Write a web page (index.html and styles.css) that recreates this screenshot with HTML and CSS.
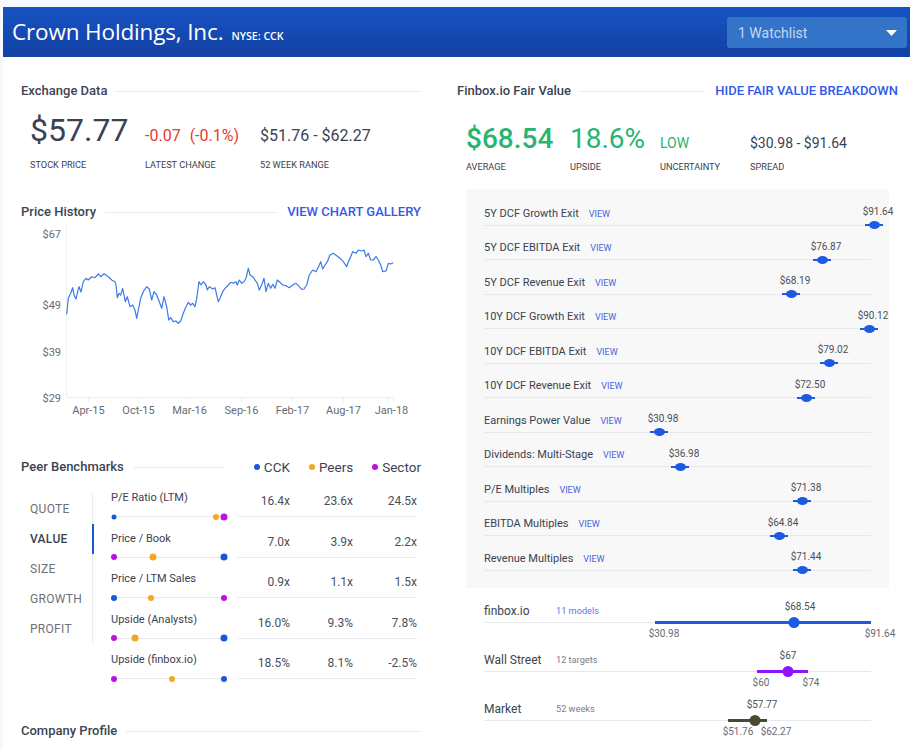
FILE: index.html
```html
<!DOCTYPE html>
<html lang="en">
<head>
<meta charset="utf-8">
<title>Crown Holdings, Inc.</title>
<link rel="stylesheet" href="styles.css">
</head>
<body>
<div class="page">
  <header class="topbar">
    <div class="brand"><h1 class="company">Crown Holdings, Inc.</h1><span class="ticker">NYSE: CCK</span></div>
    <div class="watch"><span>1 Watchlist</span><svg class="caret" width="11" height="6" viewBox="0 0 11 6"><path d="M0 0h11L5.5 6z" fill="#fff"/></svg></div>
  </header>

  <div class="main">
    <div class="col-left">
      <section class="exch">
        <div class="sec-head"><h2>Exchange Data</h2><span class="rule"></span></div>
        <div class="stats">
          <div class="val big">$57.77</div>
          <div class="val red">-0.07<span class="pct">(-0.1%)</span></div>
          <div class="val">$51.76 - $62.27</div>
          <div class="lbl">Stock Price</div>
          <div class="lbl">Latest Change</div>
          <div class="lbl">52 Week Range</div>
        </div>
      </section>

      <section class="history">
        <div class="sec-head"><h2>Price History</h2><span class="rule"></span><a class="link">VIEW CHART GALLERY</a></div>
        <svg class="chart" width="400" height="200" viewBox="21 222 400 200">
          <g stroke="#eceff3" fill="none" stroke-width="1">
            <path d="M66.5 226V397.5H393.5"/>
            <path d="M88.5 397v5M138.5 397v5M189.5 397v5M241.5 397v5M292.5 397v5M343.5 397v5M388.5 397v5M393.5 397v5"/>
          </g>
          <g class="ax">
            <text x="61" y="237.5" text-anchor="end">$67</text>
            <text x="61" y="309" text-anchor="end">$49</text>
            <text x="61" y="355.5" text-anchor="end">$39</text>
            <text x="61" y="402" text-anchor="end">$29</text>
            <text x="88.5" y="414" text-anchor="middle">Apr-15</text>
            <text x="138.5" y="414" text-anchor="middle">Oct-15</text>
            <text x="189.5" y="414" text-anchor="middle">Mar-16</text>
            <text x="241.5" y="414" text-anchor="middle">Sep-16</text>
            <text x="292.5" y="414" text-anchor="middle">Feb-17</text>
            <text x="343.5" y="414" text-anchor="middle">Aug-17</text>
            <text x="391.5" y="414" text-anchor="middle">Jan-18</text>
          </g>
          <path class="price" d="M66.7,314.3 L68.3,298.3 70.7,293.3 72.7,287.7 74,295 76,299 77.7,291.7 79,286.7 81,292 83.3,281.7 86,278.3 88.3,280 91.7,276.7 95,277.7 98.3,274 100.7,276.7 104,273.7 108.3,276.7 111.7,280 115,281.7 116,285 117.3,297.7 119,293.3 120.7,295 122.7,288.3 124,295 125.3,301.7 127.3,296.7 130,306.7 132.7,305 135,310 136.7,318.3 138.3,310 140.7,298.3 143.3,291.7 146.7,286.7 149.3,289 151.7,300 154,291.7 156.7,295 159.3,301.7 161.7,308.3 164,296.7 166.7,306.7 168.7,320 170.7,317.7 173.3,321.7 176,321 178.3,323.3 180.7,321 183.3,313.3 186,306.7 188.3,302.3 190.7,305 192.7,303.3 195,306.7 196.7,298.3 199,281.7 201,285 203.3,281.7 206,285 207.3,290 209.3,286.7 212.7,289 215,287.7 216.7,295 218.3,301.7 220,298.3 222.7,291.7 225,288.3 228.3,285 230.7,282.3 233.3,283.3 236,281.7 237.3,285 239.3,280 241.7,283.3 244,281.7 246,278.3 248.3,268.3 250,275 252.7,276.7 255,280 257.3,283.3 259.3,290 261.7,285 264,278.3 266,291.7 268.3,283.3 270.7,288.3 272.7,284.3 275,288.3 277.3,280 280,282.3 282.7,285 286,285.7 289.3,287.7 292.7,285 296,283.3 299.3,286.7 301.7,289.3 304,289 306.7,285 309.3,275 312.7,270 316,271.7 319.3,265 320.7,261.7 322.7,269 325,265 327.3,261.7 330,255 333.3,253.3 336.7,255.7 340,258.3 343.3,261.7 346.7,266.7 348.3,261.7 350.7,256.7 352.7,251.7 356,253.3 358.3,250 361.7,251 364,250 366,256.7 368.3,253.3 370.7,260 373.3,260 376,256.7 378.3,260 380.7,265 382.7,271.7 386,271 388.3,263.3 390.7,264 393.3,262.7"/>
        </svg>
      </section>

      <section class="peers">
        <div class="sec-head"><h2>Peer Benchmarks</h2><span class="rule peer-rule"></span>
          <div class="legend">
            <span class="lg"><i class="ld blue"></i>CCK</span>
            <span class="lg"><i class="ld orange"></i>Peers</span>
            <span class="lg"><i class="ld purple"></i>Sector</span>
          </div>
        </div>
        <div class="peer-body">
          <ul class="tabs">
            <li class="tab">Quote</li>
            <li class="tab active">Value</li>
            <li class="tab">Size</li>
            <li class="tab">Growth</li>
            <li class="tab">Profit</li>
          </ul>
          <div class="metrics">
            <div class="metric">
              <div class="m-left"><div class="m-name">P/E Ratio (LTM)</div>
                <div class="track"><i class="pd orange" style="left:105px"></i><i class="pd purple l" style="left:113px"></i><i class="pd blue s" style="left:3px"></i></div></div>
              <div class="m-vals"><span>16.4x</span><span>23.6x</span><span>24.5x</span></div>
            </div>
            <div class="metric">
              <div class="m-left"><div class="m-name">Price / Book</div>
                <div class="track"><i class="pd purple" style="left:3px"></i><i class="pd orange l" style="left:42px"></i><i class="pd blue l" style="left:113px"></i></div></div>
              <div class="m-vals"><span>7.0x</span><span>3.9x</span><span>2.2x</span></div>
            </div>
            <div class="metric">
              <div class="m-left"><div class="m-name">Price / LTM Sales</div>
                <div class="track"><i class="pd blue" style="left:3px"></i><i class="pd orange" style="left:40px"></i><i class="pd purple" style="left:113px"></i></div></div>
              <div class="m-vals"><span>0.9x</span><span>1.1x</span><span>1.5x</span></div>
            </div>
            <div class="metric">
              <div class="m-left"><div class="m-name">Upside (Analysts)</div>
                <div class="track"><i class="pd purple" style="left:3px"></i><i class="pd orange l" style="left:24px"></i><i class="pd blue l" style="left:113px"></i></div></div>
              <div class="m-vals"><span>16.0%</span><span>9.3%</span><span>7.8%</span></div>
            </div>
            <div class="metric">
              <div class="m-left"><div class="m-name">Upside (finbox.io)</div>
                <div class="track"><i class="pd purple" style="left:3px"></i><i class="pd orange" style="left:61px"></i><i class="pd blue" style="left:113px"></i></div></div>
              <div class="m-vals"><span>18.5%</span><span>8.1%</span><span>-2.5%</span></div>
            </div>
          </div>
        </div>
      </section>

      <section class="profile">
        <div class="sec-head"><h2>Company Profile</h2><span class="rule"></span></div>
      </section>
    </div>

    <div class="col-right">
      <div class="sec-head"><h2>Finbox.io Fair Value</h2><span class="rule"></span><a class="link">HIDE FAIR VALUE BREAKDOWN</a></div>
      <div class="fv-stats">
        <div class="fv-big">$68.54</div>
        <div class="fv-mid">18.6%</div>
        <div class="fv-low">LOW</div>
        <div class="fv-spread">$30.98 - $91.64</div>
        <div class="lbl">Average</div>
        <div class="lbl">Upside</div>
        <div class="lbl">Uncertainty</div>
        <div class="lbl">Spread</div>
      </div>

      <div class="fv-box">
        <div class="fv-row"><span class="fv-name">5Y DCF Growth Exit</span><a class="view">VIEW</a><div class="mk" style="left:390px"><span class="mk-val">$91.64</span><span class="mk-dot"></span></div></div>
        <div class="fv-row"><span class="fv-name">5Y DCF EBITDA Exit</span><a class="view">VIEW</a><div class="mk" style="left:338px"><span class="mk-val">$76.87</span><span class="mk-dot"></span></div></div>
        <div class="fv-row"><span class="fv-name">5Y DCF Revenue Exit</span><a class="view">VIEW</a><div class="mk" style="left:307px"><span class="mk-val">$68.19</span><span class="mk-dot"></span></div></div>
        <div class="fv-row"><span class="fv-name">10Y DCF Growth Exit</span><a class="view">VIEW</a><div class="mk" style="left:385px"><span class="mk-val">$90.12</span><span class="mk-dot"></span></div></div>
        <div class="fv-row"><span class="fv-name">10Y DCF EBITDA Exit</span><a class="view">VIEW</a><div class="mk" style="left:345px"><span class="mk-val">$79.02</span><span class="mk-dot"></span></div></div>
        <div class="fv-row"><span class="fv-name">10Y DCF Revenue Exit</span><a class="view">VIEW</a><div class="mk" style="left:322px"><span class="mk-val">$72.50</span><span class="mk-dot"></span></div></div>
        <div class="fv-row"><span class="fv-name">Earnings Power Value</span><a class="view">VIEW</a><div class="mk" style="left:175px"><span class="mk-val">$30.98</span><span class="mk-dot"></span></div></div>
        <div class="fv-row"><span class="fv-name">Dividends: Multi-Stage</span><a class="view">VIEW</a><div class="mk" style="left:196px"><span class="mk-val">$36.98</span><span class="mk-dot"></span></div></div>
        <div class="fv-row"><span class="fv-name">P/E Multiples</span><a class="view">VIEW</a><div class="mk" style="left:318px"><span class="mk-val">$71.38</span><span class="mk-dot"></span></div></div>
        <div class="fv-row"><span class="fv-name">EBITDA Multiples</span><a class="view">VIEW</a><div class="mk" style="left:295px"><span class="mk-val">$64.84</span><span class="mk-dot"></span></div></div>
        <div class="fv-row"><span class="fv-name">Revenue Multiples</span><a class="view">VIEW</a><div class="mk" style="left:318px"><span class="mk-val">$71.44</span><span class="mk-dot"></span></div></div>
      </div>

      <div class="summary">
        <div class="sum-row">
          <span class="sum-name">finbox.io</span><span class="sum-sub models">11 models</span>
          <span class="bar blue" style="left:171px;width:216px"></span>
          <span class="sdot blue" style="left:310px"></span>
          <span class="sv top" style="left:316px">$68.54</span>
          <span class="sv bot" style="left:180px">$30.98</span>
          <span class="sv bot" style="left:396px">$91.64</span>
        </div>
        <div class="sum-row">
          <span class="sum-name">Wall Street</span><span class="sum-sub">12 targets</span>
          <span class="bar violet" style="left:273px;width:51px"></span>
          <span class="sdot violet" style="left:304px"></span>
          <span class="sv top" style="left:304px">$67</span>
          <span class="sv bot" style="left:277px">$60</span>
          <span class="sv bot" style="left:327px">$74</span>
        </div>
        <div class="sum-row">
          <span class="sum-name">Market</span><span class="sum-sub">52 weeks</span>
          <span class="bar olive" style="left:244px;width:39px"></span>
          <span class="sdot olive" style="left:271px"></span>
          <span class="sv top" style="left:278px">$57.77</span>
          <span class="sv bot" style="left:254px">$51.76</span>
          <span class="sv bot" style="left:292px">$62.27</span>
        </div>
      </div>
    </div>
  </div>
</div>
</body>
</html>
```

FILE: styles.css
```css
* { box-sizing: border-box; }
html, body { margin: 0; padding: 0; }
body {
  background: #f7f8fe;
  font-family: Roboto, "Liberation Sans", sans-serif;
  color: #3a4250;
}
.page {
  margin: 7px 0 0 3px;
  width: 907px;
  height: 743px;
  background: #fff;
  overflow: hidden;
}

/* header */
.topbar {
  height: 50px;
  display: flex;
  align-items: center;
  justify-content: space-between;
  padding: 0 3px 0 9px;
  background: linear-gradient(180deg, #1752c4 0%, #1242a3 100%);
}
.brand { display: flex; align-items: baseline; }
.company {
  margin: 0;
  font-family: "Open Sans", "Noto Sans", sans-serif;
  font-weight: 400;
  font-size: 22.5px;
  line-height: 30px;
  color: #fff;
  letter-spacing: -0.15px;
}
.ticker {
  margin-left: 8px;
  font-family: "Open Sans", "Noto Sans", sans-serif;
  font-weight: 600;
  font-size: 10.6px;
  color: #fff;
}
.watch {
  width: 180px;
  height: 31px;
  border-radius: 3px;
  background: #3374c9;
  display: flex;
  align-items: center;
  justify-content: space-between;
  padding: 1px 10px 0 11px;
  color: #c7d6f0;
  font-size: 14px;
}
.caret { display: block; }

/* layout */
.main { display: flex; padding-top: 26px; }
.col-left { width: 436px; flex: 0 0 436px; padding: 0 18px; }
.col-right { flex: 1; padding: 0 12px 0 18px; }

.sec-head { display: flex; align-items: center; height: 16px; }
.sec-head h2 {
  margin: 0;
  font-size: 13px;
  font-weight: 500;
  line-height: 16px;
  color: #3c4453;
  white-space: nowrap;
}
.rule { flex: 1; height: 1px; background: #e9ebef; margin-left: 9px; }
.link {
  margin-left: 10px;
  font-size: 13px;
  font-weight: 500;
  line-height: 16px;
  color: #3459e6;
  white-space: nowrap;
  text-decoration: none;
}

/* exchange stats */
.stats {
  display: grid;
  grid-template-columns: 115px 115px 1fr;
  align-items: baseline;
  padding-left: 9px;
  margin-top: 12px;
}
.val { font-size: 16px; line-height: 20px; white-space: nowrap; color: #3a4250; }
.val.big { font-size: 32px; line-height: 38px; }
.val.red { color: #e8392f; }
.pct { margin-left: 9px; }
.lbl {
  font-size: 9.2px;
  line-height: 12px;
  margin-top: 10px;
  text-transform: uppercase;
  color: #3a4250;
  white-space: nowrap;
}

/* price history */
.history { margin-top: 33px; }
.chart { display: block; margin-top: 2px; }
.ax text { font-family: Roboto, sans-serif; font-size: 11px; fill: #666b73; }
.price { fill: none; stroke: #3b7be8; stroke-width: 1.2; stroke-linejoin: round; }

/* peers */
.peers { margin-top: 37px; }
.peer-rule { margin-left: 10px; margin-right: 30px; }
.legend { display: flex; gap: 19px; font-size: 13.5px; line-height: 16px; color: #3c4453; }
.lg { display: flex; align-items: center; white-space: nowrap; }
.ld { display: block; width: 6px; height: 6px; border-radius: 50%; margin-right: 4px; }
.blue { background: #1a56db; }
.orange { background: #f5a623; }
.purple { background: #bd10e0; }

.peer-body { display: flex; margin-top: 16px; }
.tabs {
  list-style: none;
  margin: 3px 0 0;
  padding: 0;
  width: 72px;
  height: 150px;
  border-right: 1px solid #e9ebef;
}
.tab {
  position: relative;
  height: 30px;
  line-height: 30px;
  padding-left: 9px;
  font-size: 12px;
  letter-spacing: 0.3px;
  text-transform: uppercase;
  color: #6c7079;
}
.tab.active { color: #3a4250; font-weight: 500; }
.tab.active::after {
  content: "";
  position: absolute;
  right: -2px;
  top: 0;
  width: 2px;
  height: 30px;
  background: #1a56db;
}
.metrics { margin-left: 18px; flex: 1; }
.metric { display: flex; height: 40.5px; }
.m-left { flex: 0 0 126px; }
.m-name { font-size: 11px; line-height: 14px; color: #3a4250; white-space: nowrap; }
.track { position: relative; height: 8px; margin-top: 7px; }
.track::before {
  content: "";
  position: absolute;
  left: 3px;
  width: 110px;
  top: 4px;
  height: 1px;
  background: #e6e8ec;
}
.pd {
  position: absolute;
  top: 4.5px;
  width: 6px;
  height: 6px;
  border-radius: 50%;
  transform: translate(-50%, -50%);
}
.pd.s { width: 5px; height: 5px; }
.pd.l { width: 7px; height: 7px; }
.m-vals {
  flex: 0 0 180px;
  display: grid;
  grid-template-columns: 53px 63px 64px;
  height: 26px;
  padding-top: 3px;
  border-bottom: 1px solid #e9ebef;
  font-size: 12px;
  line-height: 14px;
  color: #4a505a;
  text-align: right;
}

.profile { margin-top: 29.5px; }

/* fair value */
.fv-stats {
  display: grid;
  grid-template-columns: 104px 90px 90px 1fr;
  align-items: baseline;
  padding-left: 9px;
  margin-top: 23.4px;
}
.fv-big { font-size: 28px; line-height: 34px; font-weight: 500; color: #29b470; }
.fv-mid { font-size: 28px; line-height: 34px; color: #29b470; }
.fv-low { font-size: 14px; line-height: 18px; color: #29b470; }
.fv-spread { font-size: 14px; line-height: 18px; color: #3a4250; white-space: nowrap; }
.fv-stats .lbl { margin-top: 4.6px; }

.fv-box {
  margin: 16px 9px 0;
  background: #f8f8f8;
  padding: 2.5px 18px 17px;
}
.fv-row {
  position: relative;
  display: flex;
  align-items: center;
  height: 34.5px;
  padding: 14.5px 0 3px;
  border-bottom: 1px solid #e6e8ec;
}
.fv-name { font-size: 11px; line-height: 16px; color: #3a4250; white-space: nowrap; }
.view { margin-left: 10px; font-size: 9px; line-height: 16px; color: #4a62e0; text-decoration: none; }
.mk { position: absolute; bottom: -4.5px; width: 0; height: 8px; }
.mk-dot { position: absolute; left: -9px; bottom: 0; width: 18px; height: 8px; }
.mk-dot::before {
  content: "";
  position: absolute;
  left: 0;
  right: 0;
  top: 3px;
  height: 2px;
  background: #1c5ae2;
}
.mk-dot::after {
  content: "";
  position: absolute;
  left: 3.5px;
  top: 0;
  width: 11px;
  height: 8px;
  border-radius: 50%;
  background: #1c5ae2;
}
.mk-val {
  position: absolute;
  bottom: 11px;
  left: 4px;
  transform: translateX(-50%);
  font-size: 10px;
  line-height: 12px;
  color: #4a505a;
  white-space: nowrap;
}

/* summary */
.summary { margin: 0 27px; }
.sum-row {
  position: relative;
  display: flex;
  align-items: center;
  height: 35px;
  padding: 15px 0 3px;
  margin-bottom: 14px;
  border-bottom: 1px solid #e6e8ec;
}
.sum-name { width: 72px; font-size: 12px; line-height: 16px; color: #3a4250; }
.sum-sub { font-size: 9.2px; line-height: 16px; color: #7a7e86; }
.sum-sub.models { color: #6c74e4; }
.bar { position: absolute; bottom: -2px; height: 3px; }
.bar.blue, .sdot.blue { background: #1c5ae2; }
.violet { background: #9013fe; }
.olive { background: #4a4933; }
.sdot {
  position: absolute;
  bottom: -6px;
  width: 11px;
  height: 11px;
  border-radius: 50%;
  transform: translateX(-50%);
}
.sv {
  position: absolute;
  transform: translateX(-50%);
  font-size: 10px;
  line-height: 12px;
  color: #4a505a;
  white-space: nowrap;
}
.sv.top { bottom: 9px; }
.sv.bot { bottom: -18px; color: #666b73; }
```
